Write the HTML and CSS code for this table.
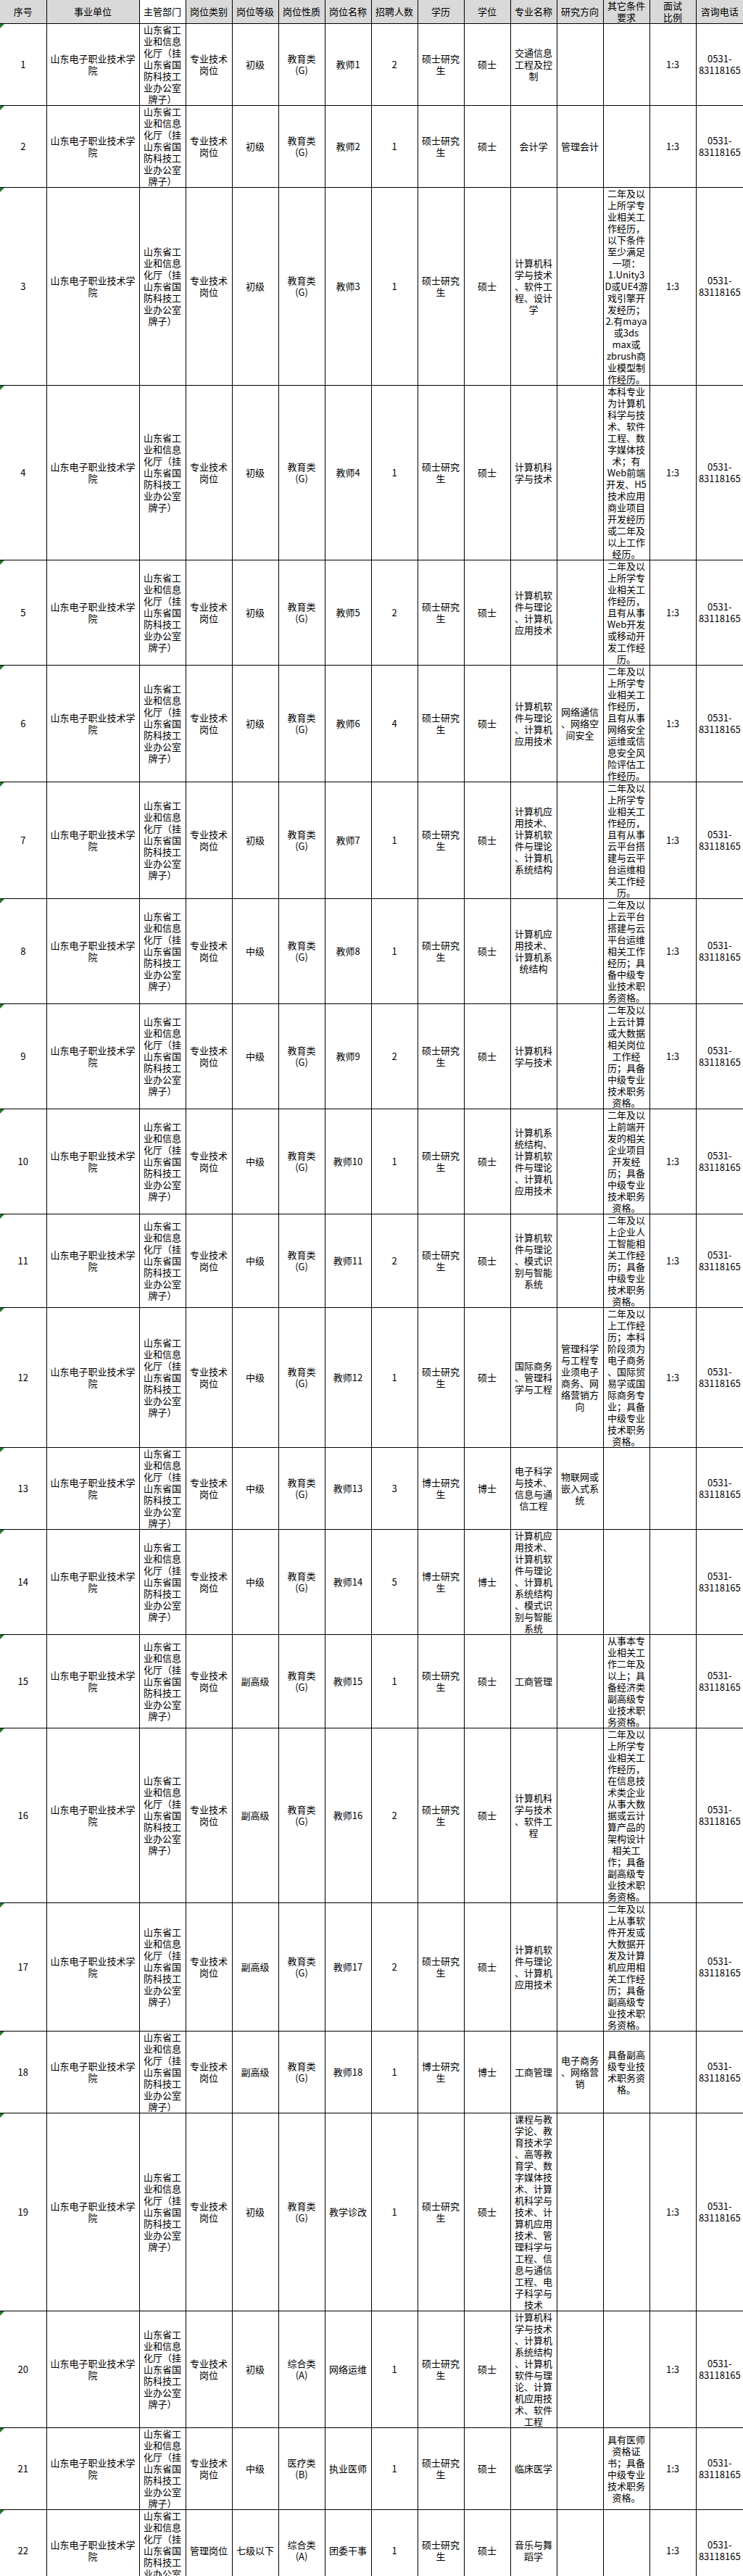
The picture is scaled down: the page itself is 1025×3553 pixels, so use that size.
FILE: index.html
```html
<!DOCTYPE html>
<html lang="zh-CN">
<head>
<meta charset="utf-8">
<title>招聘岗位表</title>
<link rel="stylesheet" href="styles.css">
</head>
<body>
<table class="sheet">
<colgroup>
<col class="c64"><col class="c128"><col class="c64"><col class="c64"><col class="c64"><col class="c64"><col class="c64"><col class="c64"><col class="c64"><col class="c64"><col class="c64"><col class="c64"><col class="c64"><col class="c64"><col class="c65">
</colgroup>
<thead>
<tr class="head">
<th>序号</th><th>事业单位</th><th class="white">主管部门</th><th>岗位类别</th><th>岗位等级</th><th>岗位性质</th><th>岗位名称</th><th>招聘人数</th><th>学历</th><th>学位</th><th>专业名称</th><th>研究方向</th><th>其它条件<br>要求</th><th>面试<br>比例</th><th>咨询电话</th>
</tr>
</thead>
<tbody>
<tr class="r7">
<td class="seq">1</td><td>山东电子职业技术学<br>院</td><td>山东省工<br>业和信息<br>化厅（挂<br>山东省国<br>防科技工<br>业办公室<br>牌子）</td><td>专业技术<br>岗位</td><td>初级</td><td>教育类<br>(G)</td><td>教师1</td><td>2</td><td>硕士研究<br>生</td><td>硕士</td><td>交通信息<br>工程及控<br>制</td><td></td><td></td><td>1:3</td><td>0531-<br>83118165</td>
</tr>
<tr class="r7">
<td class="seq">2</td><td>山东电子职业技术学<br>院</td><td>山东省工<br>业和信息<br>化厅（挂<br>山东省国<br>防科技工<br>业办公室<br>牌子）</td><td>专业技术<br>岗位</td><td>初级</td><td>教育类<br>(G)</td><td>教师2</td><td>1</td><td>硕士研究<br>生</td><td>硕士</td><td>会计学</td><td>管理会计</td><td></td><td>1:3</td><td>0531-<br>83118165</td>
</tr>
<tr class="r17">
<td class="seq">3</td><td>山东电子职业技术学<br>院</td><td>山东省工<br>业和信息<br>化厅（挂<br>山东省国<br>防科技工<br>业办公室<br>牌子）</td><td>专业技术<br>岗位</td><td>初级</td><td>教育类<br>(G)</td><td>教师3</td><td>1</td><td>硕士研究<br>生</td><td>硕士</td><td>计算机科<br>学与技术<br>、软件工<br>程、设计<br>学</td><td></td><td>二年及以<br>上所学专<br>业相关工<br>作经历，<br>以下条件<br>至少满足<br>一项：<br>1.Unity3<br>D或UE4游<br>戏引擎开<br>发经历；<br>2.有maya<br>或3ds<br>max或<br>zbrush商<br>业模型制<br>作经历。</td><td>1:3</td><td>0531-<br>83118165</td>
</tr>
<tr class="r15">
<td class="seq">4</td><td>山东电子职业技术学<br>院</td><td>山东省工<br>业和信息<br>化厅（挂<br>山东省国<br>防科技工<br>业办公室<br>牌子）</td><td>专业技术<br>岗位</td><td>初级</td><td>教育类<br>(G)</td><td>教师4</td><td>1</td><td>硕士研究<br>生</td><td>硕士</td><td>计算机科<br>学与技术</td><td></td><td>本科专业<br>为计算机<br>科学与技<br>术、软件<br>工程、数<br>字媒体技<br>术；有<br>Web前端<br>开发、H5<br>技术应用<br>商业项目<br>开发经历<br>或二年及<br>以上工作<br>经历。</td><td>1:3</td><td>0531-<br>83118165</td>
</tr>
<tr class="r9">
<td class="seq">5</td><td>山东电子职业技术学<br>院</td><td>山东省工<br>业和信息<br>化厅（挂<br>山东省国<br>防科技工<br>业办公室<br>牌子）</td><td>专业技术<br>岗位</td><td>初级</td><td>教育类<br>(G)</td><td>教师5</td><td>2</td><td>硕士研究<br>生</td><td>硕士</td><td>计算机软<br>件与理论<br>、计算机<br>应用技术</td><td></td><td>二年及以<br>上所学专<br>业相关工<br>作经历，<br>且有从事<br>Web开发<br>或移动开<br>发工作经<br>历。</td><td>1:3</td><td>0531-<br>83118165</td>
</tr>
<tr class="r10">
<td class="seq">6</td><td>山东电子职业技术学<br>院</td><td>山东省工<br>业和信息<br>化厅（挂<br>山东省国<br>防科技工<br>业办公室<br>牌子）</td><td>专业技术<br>岗位</td><td>初级</td><td>教育类<br>(G)</td><td>教师6</td><td>4</td><td>硕士研究<br>生</td><td>硕士</td><td>计算机软<br>件与理论<br>、计算机<br>应用技术</td><td>网络通信<br>、网络空<br>间安全</td><td>二年及以<br>上所学专<br>业相关工<br>作经历，<br>且有从事<br>网络安全<br>运维或信<br>息安全风<br>险评估工<br>作经历。</td><td>1:3</td><td>0531-<br>83118165</td>
</tr>
<tr class="r10">
<td class="seq">7</td><td>山东电子职业技术学<br>院</td><td>山东省工<br>业和信息<br>化厅（挂<br>山东省国<br>防科技工<br>业办公室<br>牌子）</td><td>专业技术<br>岗位</td><td>初级</td><td>教育类<br>(G)</td><td>教师7</td><td>1</td><td>硕士研究<br>生</td><td>硕士</td><td>计算机应<br>用技术、<br>计算机软<br>件与理论<br>、计算机<br>系统结构</td><td></td><td>二年及以<br>上所学专<br>业相关工<br>作经历，<br>且有从事<br>云平台搭<br>建与云平<br>台运维相<br>关工作经<br>历。</td><td>1:3</td><td>0531-<br>83118165</td>
</tr>
<tr class="r9">
<td class="seq">8</td><td>山东电子职业技术学<br>院</td><td>山东省工<br>业和信息<br>化厅（挂<br>山东省国<br>防科技工<br>业办公室<br>牌子）</td><td>专业技术<br>岗位</td><td>中级</td><td>教育类<br>(G)</td><td>教师8</td><td>1</td><td>硕士研究<br>生</td><td>硕士</td><td>计算机应<br>用技术、<br>计算机系<br>统结构</td><td></td><td>二年及以<br>上云平台<br>搭建与云<br>平台运维<br>相关工作<br>经历；具<br>备中级专<br>业技术职<br>务资格。</td><td>1:3</td><td>0531-<br>83118165</td>
</tr>
<tr class="r9">
<td class="seq">9</td><td>山东电子职业技术学<br>院</td><td>山东省工<br>业和信息<br>化厅（挂<br>山东省国<br>防科技工<br>业办公室<br>牌子）</td><td>专业技术<br>岗位</td><td>中级</td><td>教育类<br>(G)</td><td>教师9</td><td>2</td><td>硕士研究<br>生</td><td>硕士</td><td>计算机科<br>学与技术</td><td></td><td>二年及以<br>上云计算<br>或大数据<br>相关岗位<br>工作经<br>历；具备<br>中级专业<br>技术职务<br>资格。</td><td>1:3</td><td>0531-<br>83118165</td>
</tr>
<tr class="r9">
<td class="seq">10</td><td>山东电子职业技术学<br>院</td><td>山东省工<br>业和信息<br>化厅（挂<br>山东省国<br>防科技工<br>业办公室<br>牌子）</td><td>专业技术<br>岗位</td><td>中级</td><td>教育类<br>(G)</td><td>教师10</td><td>1</td><td>硕士研究<br>生</td><td>硕士</td><td>计算机系<br>统结构、<br>计算机软<br>件与理论<br>、计算机<br>应用技术</td><td></td><td>二年及以<br>上前端开<br>发的相关<br>企业项目<br>开发经<br>历；具备<br>中级专业<br>技术职务<br>资格。</td><td>1:3</td><td>0531-<br>83118165</td>
</tr>
<tr class="r8">
<td class="seq">11</td><td>山东电子职业技术学<br>院</td><td>山东省工<br>业和信息<br>化厅（挂<br>山东省国<br>防科技工<br>业办公室<br>牌子）</td><td>专业技术<br>岗位</td><td>中级</td><td>教育类<br>(G)</td><td>教师11</td><td>2</td><td>硕士研究<br>生</td><td>硕士</td><td>计算机软<br>件与理论<br>、模式识<br>别与智能<br>系统</td><td></td><td>二年及以<br>上企业人<br>工智能相<br>关工作经<br>历；具备<br>中级专业<br>技术职务<br>资格。</td><td>1:3</td><td>0531-<br>83118165</td>
</tr>
<tr class="r12">
<td class="seq">12</td><td>山东电子职业技术学<br>院</td><td>山东省工<br>业和信息<br>化厅（挂<br>山东省国<br>防科技工<br>业办公室<br>牌子）</td><td>专业技术<br>岗位</td><td>中级</td><td>教育类<br>(G)</td><td>教师12</td><td>1</td><td>硕士研究<br>生</td><td>硕士</td><td>国际商务<br>、管理科<br>学与工程</td><td>管理科学<br>与工程专<br>业须电子<br>商务、网<br>络营销方<br>向</td><td>二年及以<br>上工作经<br>历；本科<br>阶段须为<br>电子商务<br>、国际贸<br>易学或国<br>际商务专<br>业；具备<br>中级专业<br>技术职务<br>资格。</td><td>1:3</td><td>0531-<br>83118165</td>
</tr>
<tr class="r7">
<td class="seq">13</td><td>山东电子职业技术学<br>院</td><td>山东省工<br>业和信息<br>化厅（挂<br>山东省国<br>防科技工<br>业办公室<br>牌子）</td><td>专业技术<br>岗位</td><td>中级</td><td>教育类<br>(G)</td><td>教师13</td><td>3</td><td>博士研究<br>生</td><td>博士</td><td>电子科学<br>与技术、<br>信息与通<br>信工程</td><td>物联网或<br>嵌入式系<br>统</td><td></td><td></td><td>0531-<br>83118165</td>
</tr>
<tr class="r9">
<td class="seq">14</td><td>山东电子职业技术学<br>院</td><td>山东省工<br>业和信息<br>化厅（挂<br>山东省国<br>防科技工<br>业办公室<br>牌子）</td><td>专业技术<br>岗位</td><td>中级</td><td>教育类<br>(G)</td><td>教师14</td><td>5</td><td>博士研究<br>生</td><td>博士</td><td>计算机应<br>用技术、<br>计算机软<br>件与理论<br>、计算机<br>系统结构<br>、模式识<br>别与智能<br>系统</td><td></td><td></td><td></td><td>0531-<br>83118165</td>
</tr>
<tr class="r8">
<td class="seq">15</td><td>山东电子职业技术学<br>院</td><td>山东省工<br>业和信息<br>化厅（挂<br>山东省国<br>防科技工<br>业办公室<br>牌子）</td><td>专业技术<br>岗位</td><td>副高级</td><td>教育类<br>(G)</td><td>教师15</td><td>1</td><td>硕士研究<br>生</td><td>硕士</td><td>工商管理</td><td></td><td>从事本专<br>业相关工<br>作二年及<br>以上；具<br>备经济类<br>副高级专<br>业技术职<br>务资格。</td><td></td><td>0531-<br>83118165</td>
</tr>
<tr class="r15">
<td class="seq">16</td><td>山东电子职业技术学<br>院</td><td>山东省工<br>业和信息<br>化厅（挂<br>山东省国<br>防科技工<br>业办公室<br>牌子）</td><td>专业技术<br>岗位</td><td>副高级</td><td>教育类<br>(G)</td><td>教师16</td><td>2</td><td>硕士研究<br>生</td><td>硕士</td><td>计算机科<br>学与技术<br>、软件工<br>程</td><td></td><td>二年及以<br>上所学专<br>业相关工<br>作经历，<br>在信息技<br>术类企业<br>从事大数<br>据或云计<br>算产品的<br>架构设计<br>相关工<br>作；具备<br>副高级专<br>业技术职<br>务资格。</td><td></td><td>0531-<br>83118165</td>
</tr>
<tr class="r11">
<td class="seq">17</td><td>山东电子职业技术学<br>院</td><td>山东省工<br>业和信息<br>化厅（挂<br>山东省国<br>防科技工<br>业办公室<br>牌子）</td><td>专业技术<br>岗位</td><td>副高级</td><td>教育类<br>(G)</td><td>教师17</td><td>2</td><td>硕士研究<br>生</td><td>硕士</td><td>计算机软<br>件与理论<br>、计算机<br>应用技术</td><td></td><td>二年及以<br>上从事软<br>件开发或<br>大数据开<br>发及计算<br>机应用相<br>关工作经<br>历；具备<br>副高级专<br>业技术职<br>务资格。</td><td></td><td>0531-<br>83118165</td>
</tr>
<tr class="r7">
<td class="seq">18</td><td>山东电子职业技术学<br>院</td><td>山东省工<br>业和信息<br>化厅（挂<br>山东省国<br>防科技工<br>业办公室<br>牌子）</td><td>专业技术<br>岗位</td><td>副高级</td><td>教育类<br>(G)</td><td>教师18</td><td>1</td><td>博士研究<br>生</td><td>博士</td><td>工商管理</td><td>电子商务<br>、网络营<br>销</td><td>具备副高<br>级专业技<br>术职务资<br>格。</td><td></td><td>0531-<br>83118165</td>
</tr>
<tr class="r17">
<td class="seq">19</td><td>山东电子职业技术学<br>院</td><td>山东省工<br>业和信息<br>化厅（挂<br>山东省国<br>防科技工<br>业办公室<br>牌子）</td><td>专业技术<br>岗位</td><td>初级</td><td>教育类<br>(G)</td><td>教学诊改</td><td>1</td><td>硕士研究<br>生</td><td>硕士</td><td>课程与教<br>学论、教<br>育技术学<br>、高等教<br>育学、数<br>字媒体技<br>术、计算<br>机科学与<br>技术、计<br>算机应用<br>技术、管<br>理科学与<br>工程、信<br>息与通信<br>工程、电<br>子科学与<br>技术</td><td></td><td></td><td>1:3</td><td>0531-<br>83118165</td>
</tr>
<tr class="r10">
<td class="seq">20</td><td>山东电子职业技术学<br>院</td><td>山东省工<br>业和信息<br>化厅（挂<br>山东省国<br>防科技工<br>业办公室<br>牌子）</td><td>专业技术<br>岗位</td><td>初级</td><td>综合类<br>(A)</td><td>网络运维</td><td>1</td><td>硕士研究<br>生</td><td>硕士</td><td>计算机科<br>学与技术<br>、计算机<br>系统结构<br>、计算机<br>软件与理<br>论、计算<br>机应用技<br>术、软件<br>工程</td><td></td><td></td><td>1:3</td><td>0531-<br>83118165</td>
</tr>
<tr class="r7">
<td class="seq">21</td><td>山东电子职业技术学<br>院</td><td>山东省工<br>业和信息<br>化厅（挂<br>山东省国<br>防科技工<br>业办公室<br>牌子）</td><td>专业技术<br>岗位</td><td>中级</td><td>医疗类<br>(B)</td><td>执业医师</td><td>1</td><td>硕士研究<br>生</td><td>硕士</td><td>临床医学</td><td></td><td>具有医师<br>资格证<br>书；具备<br>中级专业<br>技术职务<br>资格。</td><td>1:3</td><td>0531-<br>83118165</td>
</tr>
<tr class="r7">
<td class="seq">22</td><td>山东电子职业技术学<br>院</td><td>山东省工<br>业和信息<br>化厅（挂<br>山东省国<br>防科技工<br>业办公室<br>牌子）</td><td>管理岗位</td><td>七级以下</td><td>综合类<br>(A)</td><td>团委干事</td><td>1</td><td>硕士研究<br>生</td><td>硕士</td><td>音乐与舞<br>蹈学</td><td></td><td></td><td>1:3</td><td>0531-<br>83118165</td>
</tr>
</tbody>
</table>
</body>
</html>
```

FILE: styles.css
```css
html, body {
  margin: 0;
  padding: 0;
  background: #ffffff;
}

body {
  font-family: "Noto Sans CJK SC", "Noto Sans", "DejaVu Sans", sans-serif;
  font-size: 13px;
  line-height: 16px;
  color: #000000;
}

.sheet {
  border-collapse: collapse;
  table-layout: fixed;
  width: 1025px;
}

.c64 { width: 64px; }
.c128 { width: 128px; }
.c65 { width: 65px; }

.sheet th,
.sheet td {
  border: 1px solid #000000;
  padding: 0;
  text-align: center;
  vertical-align: middle;
  white-space: nowrap;
  font-weight: 400;
}

.sheet th {
  background: #d9d9d9;
  border-top: none;
}

.sheet th.white {
  background: #ffffff;
}

.sheet th:first-child,
.sheet td:first-child {
  border-left: none;
}

.sheet th:last-child,
.sheet td:last-child {
  border-right: none;
}

.head { height: 32px; }
.r7 { height: 112px; }
.r8 { height: 128px; }
.r9 { height: 144px; }
.r10 { height: 160px; }
.r11 { height: 176px; }
.r12 { height: 192px; }
.r15 { height: 240px; }
.r17 { height: 272px; }

.seq {
  position: relative;
}

.seq::before {
  content: "";
  position: absolute;
  left: 0;
  top: 0;
  width: 0;
  height: 0;
  border-top: 6px solid #1d7a2a;
  border-right: 6px solid transparent;
}
```
